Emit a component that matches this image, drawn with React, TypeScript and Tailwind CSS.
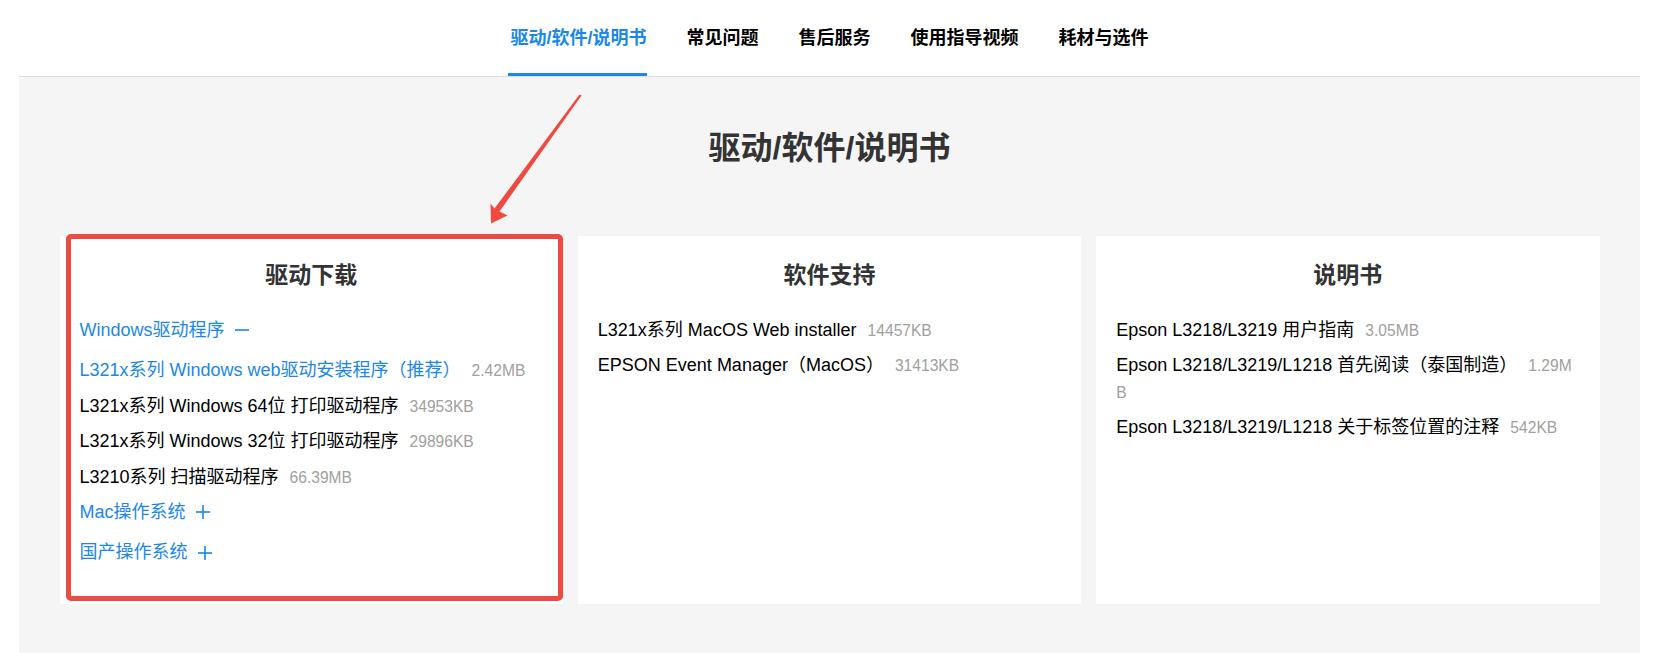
type Item = { name: string; size: string; blue?: boolean };

const tabs = ["驱动/软件/说明书", "常见问题", "售后服务", "使用指导视频", "耗材与选件"];

const windowsDrivers: Item[] = [
  { name: "L321x系列 Windows web驱动安装程序（推荐）", size: "2.42MB", blue: true },
  { name: "L321x系列 Windows 64位 打印驱动程序", size: "34953KB" },
  { name: "L321x系列 Windows 32位 打印驱动程序", size: "29896KB" },
  { name: "L3210系列 扫描驱动程序", size: "66.39MB" },
];

const software: Item[] = [
  { name: "L321x系列 MacOS Web installer", size: "14457KB" },
  { name: "EPSON Event Manager（MacOS）", size: "31413KB" },
];

const manuals: Item[] = [
  { name: "Epson L3218/L3219 用户指南", size: "3.05MB" },
  { name: "Epson L3218/L3219/L1218 首先阅读（泰国制造）", size: "1.29MB" },
  { name: "Epson L3218/L3219/L1218 关于标签位置的注释", size: "542KB" },
];

const Toggle = ({ open }: { open: boolean }) => (
  <svg width="14" height="14" viewBox="0 0 14 14" className="shrink-0">
    <line x1="0" y1="7" x2="14" y2="7" stroke="currentColor" strokeWidth="1.6" />
    {!open && <line x1="7" y1="0" x2="7" y2="14" stroke="currentColor" strokeWidth="1.6" />}
  </svg>
);

const Group = ({ label, open }: { label: string; open: boolean }) => (
  <div className="flex items-center gap-[10px] text-[#1a88e8] text-[18px] leading-[26.4px] mb-[14px]">
    <span>{label}</span>
    <Toggle open={open} />
  </div>
);

const Row = ({ item }: { item: Item }) => (
  <div
    className={`text-[18px] leading-[26.4px] mb-[9px] break-all ${
      item.blue ? "text-[#1a88e8]" : "text-black"
    }`}
  >
    {item.name}
    <span className="ml-[11px] text-[15.6px] leading-none text-[#a0a0a0]">{item.size}</span>
  </div>
);

const Card = ({ title, children }: { title: string; children: React.ReactNode }) => (
  <div className="relative bg-white px-5 pt-6 pb-[24px]">
    <h2 className="text-center text-[23px] font-bold leading-[30px] text-[#333] mb-[27px]">{title}</h2>
    {children}
  </div>
);

export default function App() {
  return (
    <div
      className="relative min-h-screen flex flex-col bg-white"
      style={{ fontFamily: '"Liberation Sans", "Noto Sans CJK SC", sans-serif' }}
    >
      <div className="mx-[19px] flex-1 flex flex-col">
        <nav className="h-[77px] border-b border-[#dddddd] flex justify-center gap-10 bg-white">
          {tabs.map((t, i) => (
            <div
              key={t}
              className={`relative flex items-center h-full text-[18px] font-bold ${
                i === 0 ? "text-[#1a88e8]" : "text-black"
              }`}
            >
              {t}
              {i === 0 && <div className="absolute -left-[2px] right-0 bottom-0 h-[3px] bg-[#1e88e5]" />}
            </div>
          ))}
        </nav>

        <main className="flex-1 bg-[#f5f5f5] pb-10">
          <h1 className="text-center text-[32px] font-bold leading-[44px] text-[#333] pt-[49px]">
            驱动/软件/说明书
          </h1>

          <div className="w-[1540px] mx-auto mt-[66px] grid grid-cols-3 gap-[15px]">
            <Card title="驱动下载">
              <Group label="Windows驱动程序" open />
              {windowsDrivers.map((d) => (
                <Row key={d.name} item={d} />
              ))}
              <Group label="Mac操作系统" open={false} />
              <Group label="国产操作系统" open={false} />
              <div className="absolute left-[6px] right-0 top-[-2px] bottom-[3px] border-[5px] border-[#ef4a3f] rounded-[5px] pointer-events-none" />
            </Card>
            <Card title="软件支持">
              {software.map((d) => (
                <Row key={d.name} item={d} />
              ))}
            </Card>
            <Card title="说明书">
              {manuals.map((d) => (
                <Row key={d.name} item={d} />
              ))}
            </Card>
          </div>
        </main>
      </div>

      {/* callout arrow pointing from the active tab to the driver card */}
      <svg
        className="absolute left-0 top-0 pointer-events-none"
        width="1659"
        height="653"
        viewBox="0 0 1659 653"
      >
        <polygon
          points="579.5,94.5 581.5,95.5 499.5,211.5 507.5,215.5 491,223.5 490.5,203.5 494.5,208.5"
          fill="#ef4a3f"
        />
      </svg>
    </div>
  );
}
